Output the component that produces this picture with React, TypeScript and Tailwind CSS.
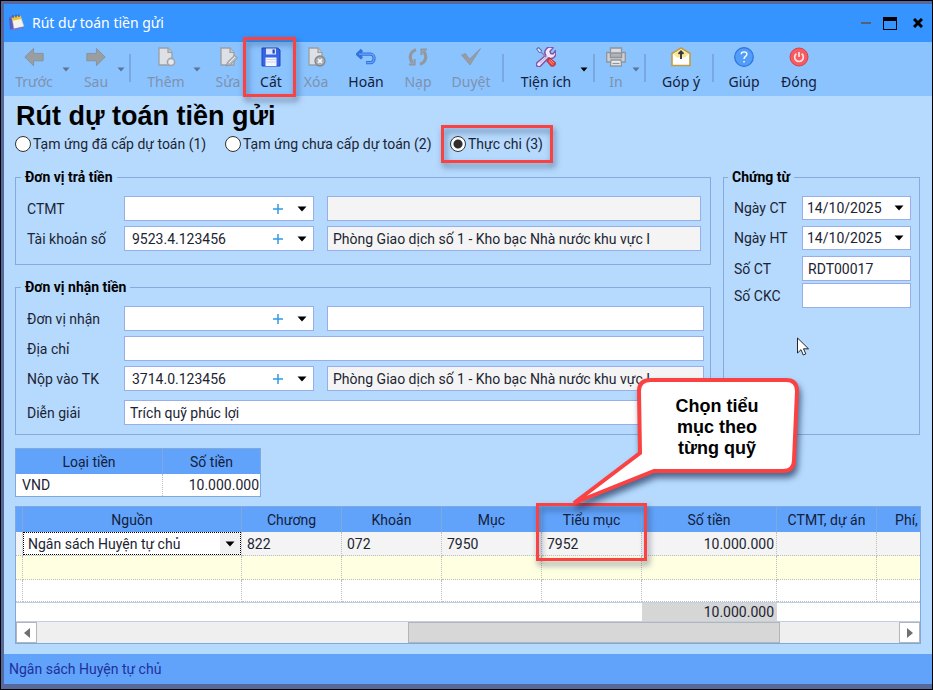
import React from 'react';
import clsx from 'clsx';

interface ToolItem {
  label: string;
  icon: React.ReactNode;
  width: string;
  disabled?: boolean;
  menu?: string;
  separator?: string;
  highlight?: boolean;
}

const ArrowIcon = ({ flip }: { flip?: boolean }) => (
  <svg viewBox="0 0 20 20" className={clsx('h-5 w-5', flip && '-scale-x-100')}>
    <path d="M0.8 10 9.6 1.4v5h9.6v7.4H9.6v5z" fill="#999ea3" stroke="#868b92" strokeWidth="0.8" />
  </svg>
);

const DocIcon = ({ children }: { children: React.ReactNode }) => (
  <svg viewBox="0 0 20 20" className="h-5 w-5" fill="none">
    <path d="M3 1h9l4 4.5V18H3z" fill="#dde0e4" stroke="#9a9fa6" strokeWidth="1.3" />
    <path d="M12 1v4.5h4" fill="#c4c8cd" stroke="#9a9fa6" strokeWidth="1.2" />
    {children}
  </svg>
);

const AddIcon = () => (
  <DocIcon>
    <circle cx="15" cy="15" r="3.6" fill="#e6e8eb" stroke="#a0a4aa" strokeWidth="1.6" />
  </DocIcon>
);

const EditIcon = () => (
  <DocIcon>
    <path d="M8.5 19l1-4 7.2-6.8 2.8 2.9-7.2 6.8z" fill="#b9bdc2" stroke="#92979e" />
    <path d="M11 16l6-6" stroke="#eceef0" />
  </DocIcon>
);

const DeleteIcon = () => (
  <DocIcon>
    <circle cx="14" cy="14" r="5" fill="#a9adb2" stroke="#83888f" strokeWidth="1.3" />
    <path d="M12 12l4 4m0-4-4 4" stroke="#fff" strokeWidth="1.6" />
  </DocIcon>
);

const SaveIcon = () => (
  <svg viewBox="0 0 20 20" className="h-5 w-5">
    <path d="M1 1h15.5L19 3v16H1z" fill="#3764e4" stroke="#2344b8" />
    <path d="M5 1.5h10v6H5z" fill="#dde6fb" />
    <path d="M11.5 2.5h2.3v4h-2.3z" fill="#2449c8" />
    <path d="M4.5 10.5h11V19h-11z" fill="#f4f6fd" />
    <path d="M5 12.5h10M5 15h10" stroke="#c9d3ee" />
  </svg>
);

const UndoIcon = () => (
  <svg viewBox="0 0 20 20" className="h-5 w-5" fill="none">
    <path d="M6 3 1.6 7.2 6 11.4M2 7.2h12.5a3.6 3.6 0 0 1 3.5 3.6V12a3.6 3.6 0 0 1-3.5 3.6H10" stroke="#3172de" strokeWidth="3.2" />
    <path d="M3 7.2h11.5a3.6 3.6 0 0 1 3.5 3.6V12a3.6 3.6 0 0 1-3.5 3.6h-4" stroke="#69a5fa" strokeWidth="1.2" />
  </svg>
);

const ReloadIcon = () => (
  <svg viewBox="0 0 20 20" className="h-5 w-5" fill="none" stroke="#93989e" strokeWidth="3.2">
    <path d="M8 2.8C1.3 5 1 12 4.6 16" />
    <path d="M12 17.2C18.7 15 19 8 15.4 4" />
    <path d="M1 17.5h5.6V12M19 2.5h-5.6V8" strokeWidth="2" />
  </svg>
);

const ApproveIcon = () => (
  <svg viewBox="0 0 20 20" className="h-5 w-5">
    <path d="M0.5 8 4.5 6.500l4 5.500L19.500 1.500 9 18z" fill="#989da3" stroke="#888d94" strokeWidth="0.6" />
  </svg>
);

const ToolsIcon = () => (
  <svg viewBox="0 0 20 20" className="h-5 w-5" fill="none">
    <path
      d="M1 15.8 9.8 8.2a5.200 5.200 0 0 1 7.200-7.200l-3 3.300.8 2.200 2.200.5 2.300-3a5.200 5.200 0 0 1-6.900 7L4.500 19A2.200 2.200 0 0 1 1 15.8z"
      fill="#f1e6fa"
      stroke="#8155a8"
      strokeWidth="1.500"
    />
    <path d="M4 16 11.500 9" stroke="#cdb6e4" strokeWidth="1.200" />
    <path d="M0.800 2 2.500 0.500 5.500 3.500 5 5.200 3.300 5.500z" fill="#e6f2fc" stroke="#6470b8" strokeWidth="1.100" />
    <path d="M5 5l5 5" stroke="#8a7fc0" strokeWidth="1.600" />
    <path d="m10.800 13.800 2.700-2.700 5.500 4.200c1.200 2.300-1 4.500-3.800 3.700z" fill="#e24b45" stroke="#b83442" strokeWidth="1.100" />
    <path d="m12.800 13.500 3.700 3.700M14.500 12.500l3.500 3.500" stroke="#f89a8c" strokeWidth="0.900" />
  </svg>
);

const PrinterIcon = () => (
  <svg viewBox="0 0 20 20" className="h-5 w-5" fill="#d9dbde" stroke="#90959b" strokeWidth="1.300">
    <path d="M0.700 5.500h18.600v9.500H0.700z" fill="#ced0d3" />
    <path d="M4.500 1h11v9h-11z" />
    <path d="M4.500 6h11v4.500h-11z" fill="#b0b3b7" />
    <path d="M5 13h10l.5 6h-11z" fill="#eceded" />
    <path d="M6.500 16.500h7" />
  </svg>
);

const FeedbackIcon = () => (
  <svg viewBox="0 0 20 20" className="h-5 w-5">
    <path d="M1 6.500 10 1l9 5.500V18.500H1z" fill="#fff" stroke="#c39d3b" strokeWidth="1.600" />
    <path d="M2.500 7 10 2.200 17.500 7 14 10.500H6z" fill="#fbe694" />
    <path d="M10 4v8M7.500 6.800 10 4.300l2.500 2.500" fill="none" stroke="#35383d" strokeWidth="1.900" />
  </svg>
);

const HelpIcon = () => (
  <svg viewBox="0 0 20 20" className="h-5 w-5" fill="none">
    <circle cx="10" cy="10" r="9.300" fill="#519df9" stroke="#2d74d9" strokeWidth="1.200" />
    <path d="M7.200 7.300c0-3.300 5.700-3.300 5.700 0 0 2-2.900 2.200-2.900 4.700" stroke="#fff" strokeWidth="1.400" />
    <path d="M9.300 14h1.500v1.500H9.300z" fill="#fff" />
  </svg>
);

const PowerIcon = () => (
  <svg viewBox="0 0 20 20" className="h-5 w-5" fill="none">
    <circle cx="10" cy="10" r="9" fill="#f65b62" stroke="#dc3e48" />
    <path d="M7.400 6.800a4.300 4.300 0 1 0 5.200 0M10 5v5" stroke="#ffe3e3" strokeWidth="1.700" />
  </svg>
);

const AppIcon = () => (
  <svg viewBox="0 0 18 20" className="h-5 w-[18px]">
    <path d="M1 5 4 3l3 13-5 1z" fill="#5a5cc0" />
    <path d="M4 4.500 12.500 3 16 13.500 6 16z" fill="#f6f4ea" stroke="#b7bfdc" strokeWidth="0.500" />
    <path d="M3.500 4.200 12.300 2.500l1 3.600-8.800 1.700z" fill="#f1c336" />
    <path d="M2 16.500 6 15.500l10-2-1 2-9.500 2z" fill="#7379d6" />
    <path d="M5 5V2M8 4.500v-3M11 4V1.500" stroke="#43527f" strokeWidth="1.200" />
  </svg>
);

const Caret = ({ className = 'text-black' }: { className?: string }) => (
  <svg viewBox="0 0 10 6" className={clsx('h-[6px] w-[10px] shrink-0', className)}>
    <path d="M0.500 0.500h9L5 5.500z" fill="currentColor" />
  </svg>
);

const tools: ToolItem[] = [
  { label: 'Trước', icon: <ArrowIcon />, width: 'ml-0.5 w-14', disabled: true, menu: '' },
  { label: 'Sau', icon: <ArrowIcon flip />, width: 'ml-[5px] w-[42px]', disabled: true, menu: '', separator: 'ml-1 mr-2' },
  { label: 'Thêm', icon: <AddIcon />, width: 'w-[54px]', disabled: true, menu: '' },
  { label: 'Sửa', icon: <EditIcon />, width: 'ml-[7px] w-10', disabled: true },
  { label: 'Cất', icon: <SaveIcon />, width: 'w-[46px]', highlight: true },
  { label: 'Xóa', icon: <DeleteIcon />, width: 'w-11', disabled: true },
  { label: 'Hoãn', icon: <UndoIcon />, width: 'w-14' },
  { label: 'Nạp', icon: <ReloadIcon />, width: 'w-12', disabled: true },
  { label: 'Duyệt', icon: <ApproveIcon />, width: 'w-[58px]', disabled: true, separator: 'ml-0.5 mr-2' },
  { label: 'Tiện ích', icon: <ToolsIcon />, width: 'w-[68px]', menu: '', separator: 'ml-[5px] mr-[5px]' },
  { label: 'In', icon: <PrinterIcon />, width: 'w-8', disabled: true, menu: '', separator: 'ml-1 mr-2' },
  { label: 'Góp ý', icon: <FeedbackIcon />, width: 'w-[54px]', separator: 'ml-1 mr-1.5' },
  { label: 'Giúp', icon: <HelpIcon />, width: 'w-12' },
  { label: 'Đóng', icon: <PowerIcon />, width: 'ml-[3px] w-14' },
];

const Highlight = ({ className }: { className: string }) => (
  <div
    className={clsx(
      'pointer-events-none absolute z-10 border-3 border-[#fb4243] drop-shadow-[2px_4px_3px_rgba(30,50,90,0.6)]',
      className
    )}
  />
);

const Toolbar = () => (
  <div className="flex h-[54px] items-start bg-[#8bc3ff] font-['Noto_Sans','Open_Sans',sans-serif]">
    {tools.map((tool) => (
      <React.Fragment key={tool.label}>
        <button
          disabled={tool.disabled}
          className={clsx(
            'relative flex shrink-0 flex-col items-center pt-[5px] text-sm leading-5 whitespace-nowrap',
            tool.width,
            tool.disabled ? 'text-[#7e92ad]' : 'text-[#14203a]'
          )}
        >
          {tool.icon}
          <span className="mt-[5px]">{tool.label}</span>
          {tool.highlight && <Highlight className="-top-[5px] -left-[5px] h-15 w-[53px]" />}
        </button>
        {tool.menu !== undefined && (
          <button disabled={tool.disabled} aria-label={`${tool.label} menu`} className={clsx('flex h-[54px] w-2 shrink-0 items-center', tool.menu)}>
            <svg viewBox="0 0 8 5" className={clsx('h-[5px] w-2', tool.disabled ? 'text-[#5d7495]' : 'text-black')}>
              <path d="M0.500 0.500h7L4 4.500z" fill="currentColor" />
            </svg>
          </button>
        )}
        {tool.separator && <span className={clsx('mt-3 h-7 w-0.5 shrink-0 bg-[#78a7e2]', tool.separator)} />}
      </React.Fragment>
    ))}
  </div>
);

const boxStyle = 'border border-[#98aeea] bg-white';

interface ComboProps {
  id: string;
  value?: string;
  addable?: boolean;
  className?: string;
}

const Combo = ({ id, value = '', addable, className }: ComboProps) => (
  <div className={clsx('flex items-center', boxStyle, className)}>
    <input id={id} defaultValue={value} className={clsx('min-w-0 flex-1 outline-none', addable ? 'pl-[7px]' : 'pl-1')} />
    {addable && (
      <button aria-label="Thêm mới" className="mr-2 flex w-[10px] justify-center">
        <svg viewBox="0 0 10 10" className="h-[10px] w-[10px]">
          <path d="M5 0v10M0 5h10" stroke="#2f9be6" strokeWidth="1.500" />
        </svg>
      </button>
    )}
    <button aria-label="Mở danh sách" className="flex w-[22px] justify-center">
      <Caret />
    </button>
  </div>
);

const Field = ({ id, label, className, children }: { id: string; label: string; className?: string; children: React.ReactNode }) => (
  <div className={clsx('flex items-center', className)}>
    <label htmlFor={id} className="w-[97px] shrink-0">{label}</label>
    {children}
  </div>
);

const DocField = ({ id, label, children }: { id: string; label: string; children: React.ReactNode }) => (
  <div className="flex items-center">
    <label htmlFor={id} className="w-[68px] shrink-0">{label}</label>
    {children}
  </div>
);

const groupStyle = 'min-w-0 border border-[#86aadb]';
const legendStyle = '-ml-1.5 h-4 px-1 font-bold leading-4 text-black';
const readOnlyStyle = 'h-[25px] min-w-0 flex-1 border border-[#98aeea] bg-[#f4f4f4] px-[5px]';
const inputStyle = clsx('h-[25px] min-w-0 flex-1 px-[5px] outline-none', boxStyle);

const columns = ['Chương', 'Khoản', 'Mục', 'Tiểu mục', 'Số tiền', 'CTMT, dự án', 'Phí,'];
const values = ['822', '072', '7950', '7952', '10.000.000', '', ''];
const cell = 'border-r border-b border-dotted border-[#bdbdbd] px-[5px]';

const DetailTable = () => (
  <div className="relative mt-[9px] border border-[#7fa8de] bg-white">
    <table className="w-full table-fixed border-separate border-spacing-0">
      <colgroup>
        <col className="w-[7px]" />
        <col className="w-[219px]" />
        <col className="w-[100px]" />
        <col className="w-[100px]" />
        <col className="w-[100px]" />
        <col className="w-[100px]" />
        <col className="w-[135px]" />
        <col className="w-[100px]" />
        <col />
      </colgroup>
      <thead>
        <tr className="h-[25px] bg-[#61a3fa] text-[#14203a]">
          <th className="border-r border-[#7fa8de]" />
          <th className="border-r border-[#7fa8de] font-normal">Nguồn</th>
          {columns.map((name) => (
            <th key={name} className="border-r border-[#7fa8de] p-0 font-normal whitespace-nowrap last:border-r-0 last:pl-4">
              {name}
            </th>
          ))}
        </tr>
      </thead>
      <tbody>
        <tr className="h-6 bg-[#f4f4f4]">
          <td className={cell} />
          <td className="border-r border-b border-dotted border-[#bdbdbd] p-0">
            <div className="relative flex items-center border border-dotted border-black bg-white">
              <select aria-label="Nguồn" className="h-[21px] w-full appearance-none pl-1 outline-none">
                <option>Ngân sách Huyện tự chủ</option>
              </select>
              <span className="pointer-events-none absolute right-0 flex h-[21px] w-5 items-center justify-center bg-[#f1f1f1]">
                <Caret />
              </span>
            </div>
          </td>
          {values.map((value, i) => (
            <td key={i} className={clsx('border-r border-b border-dotted border-[#bdbdbd] py-0 pl-[5px]', columns[i] === 'Số tiền' && 'pr-0.5 text-right', i === 6 && 'border-r-0')}>
              {value}
            </td>
          ))}
        </tr>
        {['h-6 bg-[#ffffe1]', 'h-[22px] bg-white'].map((row) => (
          <tr key={row} className={row}>
            {Array.from({ length: 9 }, (_, i) => (
              <td key={i} className={clsx(cell, i === 8 && 'border-r-0')} />
            ))}
          </tr>
        ))}
      </tbody>
      <tfoot>
        <tr className="h-5">
          <td colSpan={6} className="border-y border-[#bcd0e6] p-0" />
          <td className="border-y border-[#bcd0e6] bg-[#d6d6d6] py-0 pr-[3px] pl-0 text-right leading-[17px]">10.000.000</td>
          <td colSpan={2} className="border-y border-[#bcd0e6] p-0" />
        </tr>
      </tfoot>
    </table>
    <div className="flex h-[21px] bg-[#efefef]">
      <button aria-label="Cuộn trái" className="flex w-[21px] items-center justify-center border border-[#b5b5b5] bg-white">
        <svg viewBox="0 0 6 10" className="h-[10px] w-[6px]"><path d="M6 0v10L0 5z" fill="#707070" /></svg>
      </button>
      <div className="flex-1">
        <div className="ml-[43%] h-full w-[43.2%] border border-[#b5b5b5] bg-[#d7d7d7]" />
      </div>
      <button aria-label="Cuộn phải" className="flex w-[21px] items-center justify-center border border-[#b5b5b5] bg-white">
        <svg viewBox="0 0 6 10" className="h-[10px] w-[6px]"><path d="M0 0v10l6-5z" fill="#707070" /></svg>
      </button>
    </div>

    <Highlight className="-top-1 left-[520px] h-[58px] w-[111px]" />
    <div className="absolute -top-[131px] left-[552px] z-20 h-[132px] w-[236px]">
      <svg viewBox="0 0 236 132" className="absolute inset-0 h-full w-full overflow-visible drop-shadow-[2px_5px_3px_rgba(20,40,80,0.65)]">
        <path
          d="M83 4H218Q229 4 229 15L226 84Q226 95 215 95H86L6 127 72 77 71 15Q71 4 83 4Z"
          fill="#fff"
          stroke="#fb4243"
          strokeWidth="4"
        />
      </svg>
      <p className="relative ml-[82px] w-[134px] px-4 pt-5 text-center font-['Liberation_Sans',Arial,sans-serif] text-lg leading-[21px] font-bold text-black">
        Chọn tiểu mục theo từng quỹ
      </p>
    </div>
  </div>
);

const App: React.FC = () => {
  const radioStyle = 'h-4 w-4 shrink-0 appearance-none rounded-full border border-[#333] bg-white checked:border-[#333] checked:bg-[radial-gradient(circle,#2f2f2f_0_4px,#fff_5px)]';

  return (
    <div className="flex min-h-screen flex-col border border-black bg-[#56699a] pt-[3px] pb-[5px] pl-[3px] font-['Roboto','Liberation_Sans',Arial,sans-serif] text-sm leading-4 text-[#1c2433]">
      <header className="flex h-[38px] items-center bg-[#3594ff] pl-1">
        <AppIcon />
        <span className="ml-1.5 font-['Noto_Sans','Open_Sans',sans-serif] text-sm text-white">Rút dự toán tiền gửi</span>
        <div className="mr-[9px] ml-auto flex items-center gap-3">
          <button aria-label="Thu nhỏ" className="flex h-4 w-[10px] items-center">
            <span className="h-0.5 w-full bg-[#566173]" />
          </button>
          <button aria-label="Phóng to" className="h-[13px] w-[14px] border border-t-4 border-black" />
          <button aria-label="Đóng cửa sổ" className="ml-1 flex w-[10px]">
            <svg viewBox="0 0 10 10" className="h-[10px] w-[10px]">
              <path d="m1 1 8 8m0-8L1 9" stroke="#000" strokeWidth="3" />
            </svg>
          </button>
        </div>
      </header>

      <Toolbar />

      <main className="flex-1 bg-[#b6dafe] pr-[11px] pb-[10px] pl-[11px]">
        <h1 className="pt-1 pl-px font-['Liberation_Sans',Arial,sans-serif] text-[27px] leading-8 font-bold text-black">
          Rút dự toán tiền gửi
        </h1>

        <div className="flex h-6 items-center">
          <label className="flex w-[210px] items-center gap-0.5">
            <input type="radio" name="kind" className={radioStyle} />
            Tạm ứng đã cấp dự toán (1)
          </label>
          <label className="flex w-[225px] items-center gap-0.5">
            <input type="radio" name="kind" className={radioStyle} />
            Tạm ứng chưa cấp dự toán (2)
          </label>
          <label className="relative flex items-center gap-0.5">
            <input type="radio" name="kind" defaultChecked className={radioStyle} />
            Thực chi (3)
            <Highlight className="-top-[11px] -left-[9px] h-[38px] w-28" />
          </label>
        </div>

        <div className="mt-[13px] mr-px flex gap-3">
          <div className="flex min-w-0 flex-1 flex-col gap-3.5">
            <fieldset className={clsx(groupStyle, 'pt-[11px] pr-[9px] pb-[13px] pl-[11px]')}>
              <legend className={legendStyle}>Đơn vị trả tiền</legend>
              <Field id="ctmt" label="CTMT">
                <Combo id="ctmt" addable className="h-[25px] w-[190px] shrink-0" />
                <input aria-label="Tên CTMT" readOnly className={clsx(readOnlyStyle, 'ml-[13px]')} />
              </Field>
              <Field id="account" label="Tài khoản số" className="mt-[5px]">
                <Combo id="account" addable value="9523.4.123456" className="h-[25px] w-[190px] shrink-0" />
                <input aria-label="Tên kho bạc" readOnly value="Phòng Giao dịch số 1 - Kho bạc Nhà nước khu vực I" className={clsx(readOnlyStyle, 'ml-[13px]')} />
              </Field>
            </fieldset>

            <fieldset className={clsx(groupStyle, 'pt-[11px] pr-1.5 pb-[9px] pl-[11px]')}>
              <legend className={legendStyle}>Đơn vị nhận tiền</legend>
              <Field id="receiver" label="Đơn vị nhận">
                <Combo id="receiver" addable className="h-[25px] w-[190px] shrink-0" />
                <input aria-label="Tên đơn vị nhận" className={clsx(inputStyle, 'ml-[13px]')} />
              </Field>
              <Field id="address" label="Địa chỉ" className="mt-[5px]">
                <input id="address" className={inputStyle} />
              </Field>
              <Field id="to-account" label="Nộp vào TK" className="mt-[5px]">
                <Combo id="to-account" addable value="3714.0.123456" className="h-[25px] w-[190px] shrink-0" />
                <input aria-label="Tên kho bạc nhận" readOnly value="Phòng Giao dịch số 1 - Kho bạc Nhà nước khu vực I" className={clsx(readOnlyStyle, 'ml-[13px]')} />
              </Field>
              <Field id="note" label="Diễn giải" className="mt-[9px]">
                <input id="note" defaultValue="Trích quỹ phúc lợi" className={inputStyle} />
              </Field>
            </fieldset>
          </div>

          <fieldset className={clsx(groupStyle, 'relative w-[197px] shrink-0 pt-[11px] pr-2 pl-[10px]')}>
            <legend className={legendStyle}>Chứng từ</legend>
            <div className="flex flex-col gap-1.5">
              <DocField id="date-ct" label="Ngày CT">
                <Combo id="date-ct" value="14/10/2025" className="h-6 min-w-0 flex-1" />
              </DocField>
              <DocField id="date-ht" label="Ngày HT">
                <Combo id="date-ht" value="14/10/2025" className="h-6 min-w-0 flex-1" />
              </DocField>
              <DocField id="number-ct" label="Số CT">
                <input id="number-ct" defaultValue="RDT00017" className={inputStyle} />
              </DocField>
            </div>
            <div className="mt-0.5">
              <DocField id="number-ckc" label="Số CKC">
                <input id="number-ckc" className={inputStyle} />
              </DocField>
            </div>
            <svg viewBox="0 0 12 19" className="absolute top-[152px] left-[73px] h-[19px] w-3">
              <path d="M0.500 1v15l3.500-3.300 2.300 5.300 2.500-1.100-2.300-5.100h5z" fill="#fff" stroke="#111" strokeWidth="0.900" />
            </svg>
          </fieldset>
        </div>

        <table className="mt-[13px] w-[246px] table-fixed border-separate border-spacing-0 border border-[#7fa8de] bg-white">
          <colgroup>
            <col className="w-[147px]" />
            <col />
          </colgroup>
          <thead>
            <tr className="h-[25px] bg-[#61a3fa] text-[#14203a]">
              <th className="border-r border-[#7fa8de] font-normal">Loại tiền</th>
              <th className="font-normal">Số tiền</th>
            </tr>
          </thead>
          <tbody>
            <tr className="h-[22px]">
              <td className="border-r border-dotted border-[#bdbdbd] py-0 pl-1.5">VND</td>
              <td className="py-0 pr-px text-right">10.000.000</td>
            </tr>
          </tbody>
        </table>

        <DetailTable />
      </main>

      <footer className="flex h-[30px] items-center bg-[#61a3fa] pl-[5px] text-[#20309c]">Ngân sách Huyện tự chủ</footer>
    </div>
  );
};

export default App;
